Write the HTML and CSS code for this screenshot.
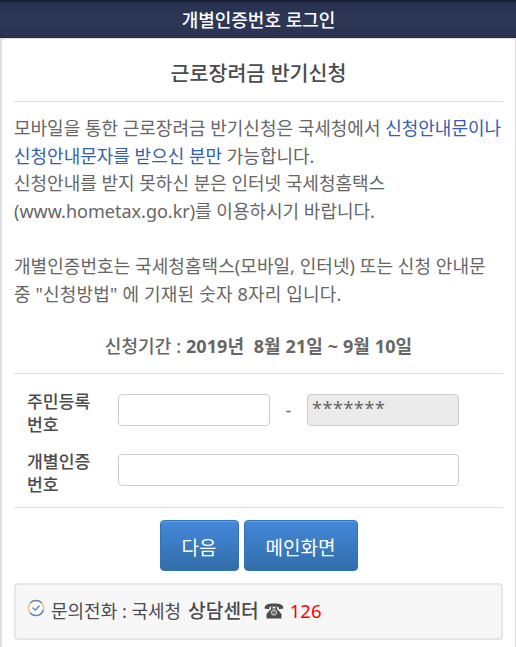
FILE: index.html
```html
<!DOCTYPE html>
<html lang="ko">

<head>
    <meta charset="UTF-8">
    <meta name="viewport" content="width=device-width, initial-scale=1.0">
    <title>개별인증번호 로그인</title>
    <link rel="stylesheet" href="styles.css">
</head>

<body>
    <header class="topbar">
        <h1>개별인증번호 로그인</h1>
    </header>

    <main class="content">
        <h2 class="title">근로장려금 반기신청</h2>

        <div class="info">
            <p class="first">모바일을 통한 근로장려금 반기신청은 국세청에서 <span class="blue">신청안내문이나<br>신청안내문자를 받으신 분만</span> 가능합니다.</p>
            <p class="second">신청안내를 받지 못하신 분은 인터넷 국세청홈택스<br><span class="url">(www.hometax.go.kr)를 이용하시기 바랍니다.</span></p>
            <p class="code-info"><span class="wide">개별인증번호는 국세청홈택스(모바일, 인터넷) 또는 신청 안내문</span><br><span class="wider">중 "신청방법" 에 기재된 숫자 8자리 입니다.</span></p>
            <p class="period"><span>신청기간 :</span> <b>2019년&nbsp; 8월 21일 ~ 9월 10일</b></p>
        </div>

        <form class="login">
            <div class="row">
                <label for="jumin1">주민등록<br>번호</label>
                <input type="text" id="jumin1" class="half" maxlength="6">
                <span class="dash">-</span>
                <div class="half masked">*******</div>
            </div>
            <div class="row">
                <label for="authNo">개별인증<br>번호</label>
                <input type="text" id="authNo" class="full" maxlength="8">
            </div>
        </form>

        <div class="buttons">
            <button type="button" class="next">다음</button>
            <button type="button" class="main">메인화면</button>
        </div>

        <div class="contact">
            <svg class="check" viewBox="0 0 18 18" width="18" height="18">
                <circle cx="9" cy="9" r="7.6" fill="#fff" stroke="#f3b96f" stroke-width="1.3" />
                <path d="M3.3 4A7.6 7.6 0 0 1 14.7 4M16.3 11A7.6 7.6 0 0 1 3 13.6" fill="none" stroke="#5b87c5" stroke-width="1.4" />
                <path d="M5.6 8.6L8.3 11.2L12.6 6.6" fill="none" stroke="#5b87c5" stroke-width="1.4" />
            </svg>
            <span>문의전화 : 국세청</span>
            <span class="center">상담센터</span>
            <svg class="tel" viewBox="0 0 20 16" width="20" height="16">
                <path d="M0.5 5.5C0.5 1.8 4 0.5 10 0.5S19.5 1.8 19.5 5.5L15 6.2L14.4 3.8H5.6L5 6.2Z" fill="#4c4c4c" />
                <path d="M7 4V6L2.5 11V15.5H17.5V11L13 6V4H11.5V5.5H8.5V4Z" fill="#4c4c4c" />
                <circle cx="10" cy="9.5" r="2.7" fill="#777" stroke="#ddd" stroke-width="0.9" />
            </svg>
            <span class="number">126</span>
        </div>
    </main>
</body>

</html>
```

FILE: styles.css
```css
* {
    box-sizing: border-box;
}

body {
    margin: 0;
    height: 647px;
    overflow: hidden;
    background-color: #dedede;
    font-family: "Noto Sans", "Noto Sans CJK KR", sans-serif;
    font-size: 18px;
    color: #666666;
    white-space: nowrap;
}

h1,
h2,
p {
    margin: 0;
}

.topbar {
    height: 38px;
    border-top: 2px solid #1c2236;
    border-bottom: 1px solid #232a45;
    background: linear-gradient(#283150, #2e3756 55%, #2a3250);
    text-align: center;
}

.topbar h1 {
    padding-left: 1px;
    font-size: 18px;
    font-weight: 500;
    line-height: 37px;
    color: #ffffff;
}

.content {
    height: 620px;
    margin: 1px 1px 0 2px;
    padding: 0 12px;
    background-color: #ffffff;
    border-radius: 3px 3px 0 0;
}

.title {
    height: 63px;
    margin-bottom: 13px;
    border-bottom: 1px solid #dddddd;
    font-size: 20.6px;
    font-weight: 500;
    line-height: 69px;
    text-align: center;
    color: #4c4c4c;
}

.info {
    height: 259px;
    border-bottom: 1px solid #dddddd;
    line-height: 27.6px;
}

.blue {
    color: #3460ad;
}

.code-info {
    margin-top: 27.6px;
}

.wide {
    letter-spacing: 0.06px;
}

.wider {
    letter-spacing: 0.18px;
}

.period {
    margin-top: 25px;
    letter-spacing: 0.1px;
    text-align: center;
}

.period span {
    font-weight: 500;
}

.login {
    height: 134px;
    padding: 16px 0 0 13px;
    border-bottom: 1px solid #dddddd;
}

.row {
    display: flex;
    height: 60px;
}

.row label {
    width: 91px;
    padding-top: 1px;
    font-weight: 500;
    font-size: 17.2px;
    line-height: 22.5px;
    color: #4c4c4c;
}

.row input,
.masked {
    height: 32px;
    margin-top: 4px;
    padding: 0 5px;
    border: 1px solid #cccccc;
    border-radius: 4px;
    font-size: 18px;
}

.half {
    width: 152px;
}

.full {
    width: 341px;
}

.dash {
    width: 37px;
    line-height: 41px;
    text-align: center;
}

.masked {
    padding-left: 4px;
    background-color: #ebebeb;
    line-height: 27px;
    letter-spacing: 0.6px;
}

.buttons {
    display: flex;
    justify-content: center;
    gap: 5px;
    margin-top: 12px;
}

.buttons button {
    height: 51px;
    padding: 2px 0 0;
    border: 1px solid #3272b5;
    border-radius: 4px;
    background: linear-gradient(#4488db, #326da9);
    box-shadow: inset 0 1px 0 #66a0e3;
    font-family: inherit;
    font-size: 19px;
    color: #ffffff;
}

.next {
    width: 79px;
}

.main {
    width: 114px;
}

.contact {
    display: flex;
    align-items: center;
    height: 57px;
    margin-top: 12px;
    padding: 0 0 3px 11px;
    border: 2px solid #e6e6e6;
    border-radius: 4px;
    background-color: #f7f7f7;
    color: #4c4c4c;
}

.check {
    margin: -4px 6px 0 0;
}

.center {
    margin-left: 7px;
    font-size: 19.2px;
    font-weight: 500;
}

.tel {
    margin: 2px 0 0 5px;
}

.number {
    margin-left: 6px;
    font-size: 18.5px;
    color: #ff0000;
}
```
